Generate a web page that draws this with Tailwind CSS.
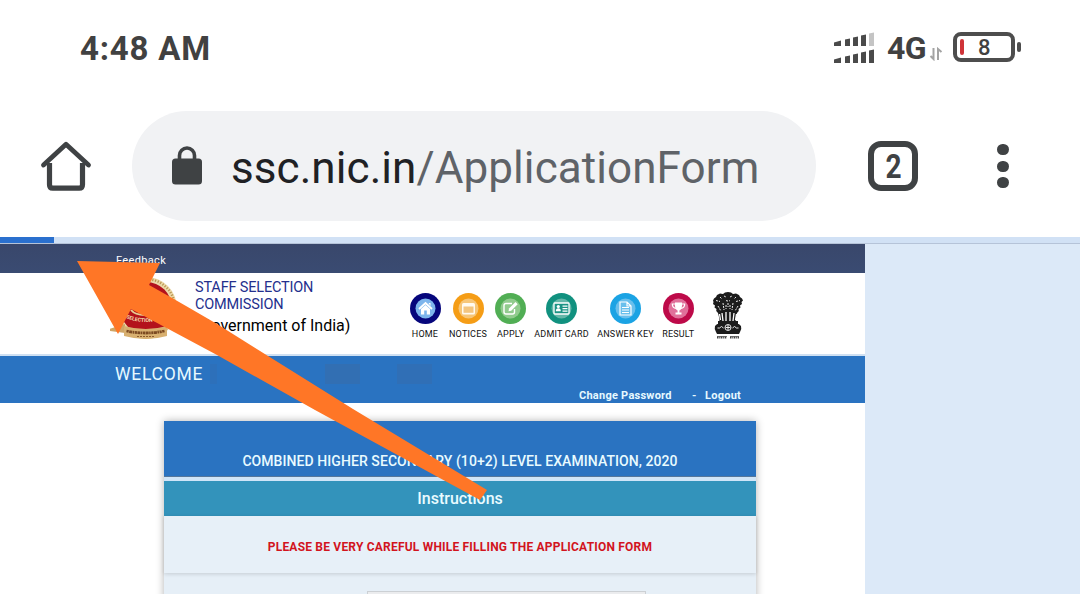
<!DOCTYPE html>
<html lang="en">
  <head>
    <meta charset="UTF-8" />
    <meta name="viewport" content="width=device-width, initial-scale=1.0" />
    <title>SSC Application Form</title>
    <script src="https://cdn.jsdelivr.net/npm/@tailwindcss/browser@4"></script>
  </head>
  <body class="bg-white font-['Roboto',sans-serif]">
    <div class="relative w-[1080px] h-[594px] overflow-hidden flex flex-col">
      <!-- Status bar -->
      <div class="h-24 shrink-0 flex justify-between pl-20 pr-[59px] text-[#414141]">
        <span class="text-[33px] leading-[98px] font-bold tracking-[0.800px] whitespace-nowrap">4:48 AM</span>
        <div class="flex">
          <svg class="w-[42px] h-[34px] mt-[31px]" viewBox="0 0 42 34" fill="#4a4a4a">
            <path d="M1 11.500l7-2v5.500H1zM12 8.500l5-1V15h-5zM20 6.500l5-1V15h-5zM28 4.500l5-1V15h-5z" />
            <path d="M36 2.500l5-1V15h-5z" fill="#c4c4c4" />
            <path d="M1 28.500l7-2V32H1zM12 25.500l5-1V32h-5zM20 23.500l5-1V32h-5zM28 21.500l5-1V32h-5zM36 19.500l5-1V32h-5z" />
          </svg>
          <span class="ml-[12px] w-10 text-[32px] leading-[96px] font-bold tracking-[-0.500px]">4G</span>
          <svg class="w-[14px] h-[14px] ml-[2px] mt-[47px]" viewBox="0 0 14 14" fill="none" stroke="#a3a3a3" stroke-width="2">
            <path d="M4.500 1v11L1.500 9M9 13V2l3.500 3" />
          </svg>
          <div class="ml-[10px] mt-8 w-[62px] h-[30px] rounded-[8px] border-4 border-[#4d4d4d] flex items-center">
            <div class="ml-[3px] w-1 h-4 rounded-[2px] bg-[#cf3338]"></div>
            <span class="ml-[14px] text-[22px] leading-[22px] pt-[2px] font-medium">8</span>
          </div>
          <div class="mt-[42px] ml-[2px] w-1 h-[10px] rounded-[2px] bg-[#4d4d4d]"></div>
        </div>
      </div>

      <!-- Browser toolbar -->
      <div class="h-[141px] shrink-0 flex pt-[15px]">
        <svg class="w-[52px] h-[52px] ml-10 mt-[29px]" viewBox="0 0 52 52" fill="none" stroke="#3f4244" stroke-width="5.200">
          <path d="M9.500 23v21.500q0 3.700 3.200 3.700h26.600q3.200 0 3.200-3.700V23" />
          <path d="M3.500 25L26 4.200 48.500 25" stroke-linejoin="round" stroke-linecap="round" stroke-width="4.800" />
        </svg>
        <div class="ml-10 w-[684px] h-[110px] rounded-full bg-[#f1f2f4] flex">
          <svg class="w-[30px] h-[39px] ml-10 mt-[35px]" viewBox="0 0 30 39">
            <rect y="12.500" width="30" height="26" rx="3.500" fill="#3f4244" />
            <path d="M7.500 14V9.500a7.500 7.500 0 0 1 15 0V14" fill="none" stroke="#3f4244" stroke-width="3.600" />
          </svg>
          <div class="ml-[29px] text-[44px] leading-[115px] tracking-[0.080px] whitespace-nowrap text-[#5f6368]"><span class="text-[#202124]">ssc.nic.in</span>/ApplicationForm</div>
        </div>
        <div class="ml-[52px] mt-[30px] w-[50px] h-[50px] rounded-[13px] border-6 border-[#3f4244] flex items-center justify-center text-[#3f4244] text-[33px] font-bold">
          <span class="scale-x-85 pt-[2px]">2</span>
        </div>
        <div class="ml-[79px] mt-[33px] flex flex-col gap-[5.500px]">
          <i class="w-[11.500px] h-[11px] rounded-full bg-[#3f4244]"></i>
          <i class="w-[11.500px] h-[11px] rounded-full bg-[#3f4244]"></i>
          <i class="w-[11.500px] h-[11px] rounded-full bg-[#3f4244]"></i>
        </div>
      </div>

      <!-- Loading progress -->
      <div class="h-[7px] shrink-0 bg-[#d1e1f5] border-b border-[#b5c3d8]">
        <div class="w-[54px] h-[6px] bg-[#2a70ce]"></div>
      </div>

      <div class="flex grow bg-[#dce9f8]">
        <div class="w-[865px] h-[350px] bg-white flex flex-col">
          <div class="h-[29px] shrink-0 bg-linear-to-b from-[#39476b] to-[#3a4b72] pl-[116px] text-white">
            <span class="text-[11px] leading-[33px] tracking-[0.350px]">Feedback</span>
          </div>

          <header class="h-[83px] shrink-0 flex border-b-2 border-[#cfe0f2]">
            <svg class="w-[70px] h-[66px] ml-[110px] mt-[3px]" viewBox="110 276 70 66">
              <circle cx="146" cy="308" r="31" fill="#ecd9a8" />
              <circle cx="146" cy="308" r="29" fill="none" stroke="#b99752" stroke-width="2.500" stroke-dasharray="1.200 1.600" />
              <circle cx="146" cy="308" r="26" fill="#b3121c" />
              <path d="M131 310q4 5 14 5 10 0 15-5M138 306l4 6M150 306l-3 6" fill="none" stroke="#e6cf94" stroke-width="2" />
              <path id="ring" d="M126 318q20 8 40 0" fill="none" />
              <text font-size="5.200" font-weight="700" fill="#f6dfb0"><textPath href="#ring">SELECTION CO</textPath></text>
              <path d="M109 329l16-5v9l-15-2z" fill="#cfa566" />
              <path d="M124 326q22 6 43 0v10q-21 6-43 0z" fill="#d8b070" />
              <path d="M126.500 331q19 4 38 0" fill="none" stroke="#7b4a22" stroke-width="2.800" stroke-dasharray="2.200 .5 3 .5 1.500 .6" />
              <path d="M137 336.500h17" stroke="#8b5a2c" stroke-dasharray="2 1" />
            </svg>
            <div class="ml-[15px] w-[210px] pt-[6px] whitespace-nowrap">
              <div class="text-[14.500px] leading-[17px] tracking-[-0.170px] text-[#24308d]">STAFF SELECTION<br />COMMISSION</div>
              <div class="mt-[2px] text-[16px] leading-[22px] text-black">(Government of India)</div>
            </div>
            <nav class="pt-5 h-[70px] flex text-[9px] leading-[10px] text-[#111] text-center whitespace-nowrap tracking-[0.200px]">
              <div class="w-10 flex flex-col items-center gap-[5px]">
                <svg class="w-[31px] h-[31px]" viewBox="0 0 31 31">
                  <circle cx="15.500" cy="15.500" r="15.500" fill="#06067c" /><circle cx="15.500" cy="15.500" r="10" fill="#7db5ec" />
                  <path d="M9 16l6.500-6 6.500 6" fill="none" stroke="#fff" stroke-width="1.800" />
                  <path d="M11 16l4.500-4 4.500 4v5.500h-3.200v-4h-2.600v4H11zM18.500 10h2v3z" fill="#fff" />
                </svg>HOME
              </div>
              <div class="w-[46px] flex flex-col items-center gap-[5px]">
                <svg class="w-[31px] h-[31px]" viewBox="0 0 31 31">
                  <circle cx="15.500" cy="15.500" r="15.500" fill="#f59d16" /><circle cx="15.500" cy="15.500" r="10" fill="#f7c678" />
                  <rect x="9" y="10" width="13" height="11.500" rx="1.500" fill="#fffaf0" /><path d="M10.500 13.500h10v6.300h-10z" fill="#f3c57f" />
                </svg>NOTICES
              </div>
              <div class="w-[39.500px] flex flex-col items-center gap-[5px]">
                <svg class="w-[31px] h-[31px]" viewBox="0 0 31 31">
                  <circle cx="15.500" cy="15.500" r="15.500" fill="#51ae54" /><circle cx="15.500" cy="15.500" r="10" fill="#91cb8d" />
                  <path d="M17 10.500h-6q-2 0-2 2V19q0 2 2 2h6.500q2 0 2-2v-3" fill="none" stroke="#fff" stroke-width="1.400" />
                  <path d="M14 15.500l6.500-6.500 2.200 2.200-6.500 6.500-2.700.5z" fill="#fff" />
                </svg>APPLY
              </div>
              <div class="w-[62px] flex flex-col items-center gap-[5px]">
                <svg class="w-[31px] h-[31px]" viewBox="0 0 31 31">
                  <circle cx="15.500" cy="15.500" r="15.500" fill="#11917f" /><circle cx="15.500" cy="15.500" r="10" fill="#64b7a9" />
                  <rect x="8" y="10" width="15" height="11" rx=".8" fill="#1c9485" stroke="#fff" stroke-width="1.300" />
                  <circle cx="12.300" cy="13.500" r="1.600" fill="#fff" /><path d="M9.800 18.300q0-3 2.500-3t2.500 3zM16.500 12.500h5v1.200h-5zM16.500 15h5v1.200h-5zM16.500 17.500h5v1.200h-5z" fill="#fff" />
                </svg>ADMIT CARD
              </div>
              <div class="w-[66px] flex flex-col items-center gap-[5px]">
                <svg class="w-[31px] h-[31px]" viewBox="0 0 31 31">
                  <circle cx="15.500" cy="15.500" r="15.500" fill="#1ba3e4" /><circle cx="15.500" cy="15.500" r="10" fill="#69bfec" />
                  <path d="M10 9h7l4 4v9H10zM17 9v4h4M12 14.500h7M12 17h7M12 19.500h7" fill="none" stroke="#fff" stroke-width="1.200" />
                </svg>ANSWER KEY
              </div>
              <div class="w-[39.500px] flex flex-col items-center gap-[5px]">
                <svg class="w-[31px] h-[31px]" viewBox="0 0 31 31">
                  <circle cx="15.500" cy="15.500" r="15.500" fill="#bd0a49" /><circle cx="15.500" cy="15.500" r="10" fill="#e0709a" />
                  <path d="M12 9.500h7v3q0 4-2.600 5v2h2.100v2h-6v-2h2.100v-2q-2.600-1-2.600-5z" fill="#fff" />
                  <path d="M12 11H9.300q0 4 4 4.500M19 11h2.700q0 4-4 4.500" fill="none" stroke="#fff" stroke-width="1.200" />
                </svg>RESULT
              </div>
            </nav>
            <!-- State emblem -->
            <svg class="w-8 h-[50px] ml-[14px] mt-[18px]" viewBox="0 0 32 50" fill="#1c1c1c">
              <path d="M11 3l2-1.500 3-.5 3 .5 2 1.500 3-.5 3 1.500 1 2 2 1.500 1 2-1.500 1.500.5 2-2 1.500.5 2-2 1.500.3 2-1.800 2-1 4-1 9H8L7 26l-1-4-1.800-2 .3-2-2-1.500.5-2-2-1.500.5-2L1 9.500 2 7.500 4 6l1-2 3-1.500z" />
              <path d="M3 35q2-3 5-2.500h16q3-.5 5 2.500 1 3-1 6l-1 2H5l-1-2q-2-3-1-6zM6 30h20v4H6z" />
              <g fill="none" stroke="#fff" stroke-width=".9">
                <path d="M12 5l2 1M18 6l2-1M14 9.500q2 1 4 0M4 9.500l4 1M24 10.500l4-1M11 12l1 7M21 12l-1 7M16 12v4M6 15l3 5M26 15l-3 5M8 6l2 2M24 6l-2 2M14 14v4M18 14v4" stroke-dasharray="2 1" />
                <path d="M10 22l1 8M14 21v9M18 21v9M22 22l-1 8M7.500 23l1 6M24.500 23l-1 6" stroke-width="1.300" />
                <circle cx="16" cy="36.500" r="3" /><path d="M16 34v5M13.500 36.500h5M5.500 37h2l2-1.500 2 1.500M20.500 37l2-1.500 2 1.500h2" />
              </g>
              <path d="M5 46.500h10M18 46.500h9" stroke="#444" stroke-width="1.800" stroke-dasharray="1.500 .8 1 .6" />
              <path d="M5 45.500h10M18 45.500h9" stroke="#444" stroke-width=".7" />
            </svg>
          </header>

          <div class="h-[47px] shrink-0 relative bg-[#2a73c1] text-[#e6f9ff]">
            <div class="flex items-start">
              <span class="ml-[115px] w-[95px] text-[17.500px] leading-[36px] tracking-[0.750px]">WELCOME</span>
              <i class="w-[7px] h-5 mt-2 bg-[#2d70ba]"></i>
              <i class="w-[35px] h-5 mt-2 ml-[108px] bg-[#326fb3]"></i>
              <i class="w-[35px] h-5 mt-2 ml-[37px] bg-[#306fb6]"></i>
            </div>
            <div class="absolute left-[579px] top-[33px] w-[170px] flex text-[11px] leading-[14px] font-bold whitespace-nowrap tracking-[0.250px]">
              <span>Change Password</span><span class="absolute left-[113px]">-</span><span class="absolute left-[126px]">Logout</span>
            </div>
          </div>

          <main class="ml-[164px] mt-[18px] w-[592px] h-[190px] shrink-0 bg-[#e6eff7] shadow-[0_0_8px_rgba(0,0,0,0.3)] text-center font-medium text-[#e9fbff]">
            <div class="h-14 bg-[#2a73c1] pt-[29px] text-[14px] leading-[22px] tracking-[0.070px] border-b border-[#55779c]">COMBINED HIGHER SECONDARY (10+2) LEVEL EXAMINATION, 2020</div>
            <div class="h-1 bg-[#d0e5f8]"></div>
            <div class="h-[35px] bg-[#3393bb] text-[16px] leading-[35px]">Instructions</div>
            <div class="h-[57px] bg-[#e7f0f8] shadow-[0_1px_4px_rgba(0,0,0,0.15)] text-[12px] leading-[62px] tracking-[0.200px] font-bold text-[#d2141e]">PLEASE BE VERY CAREFUL WHILE FILLING THE APPLICATION FORM</div>
            <div class="ml-[203px] mt-[18px] w-[279px] h-8 bg-[#ebecee] border border-[#ccd0d4]"></div>
          </main>
        </div>
      </div>

      <!-- Pointer arrow over the page -->
      <svg class="absolute left-0 top-0 w-[1080px] h-[594px]" viewBox="0 0 1080 594" fill="#ff7626">
        <path d="M77 261L160 263 149 285Q176 300 217 324L353 409 487 490 480 500 315 410 217 355 131 309 118 334Z" />
      </svg>
    </div>
  </body>
</html>
